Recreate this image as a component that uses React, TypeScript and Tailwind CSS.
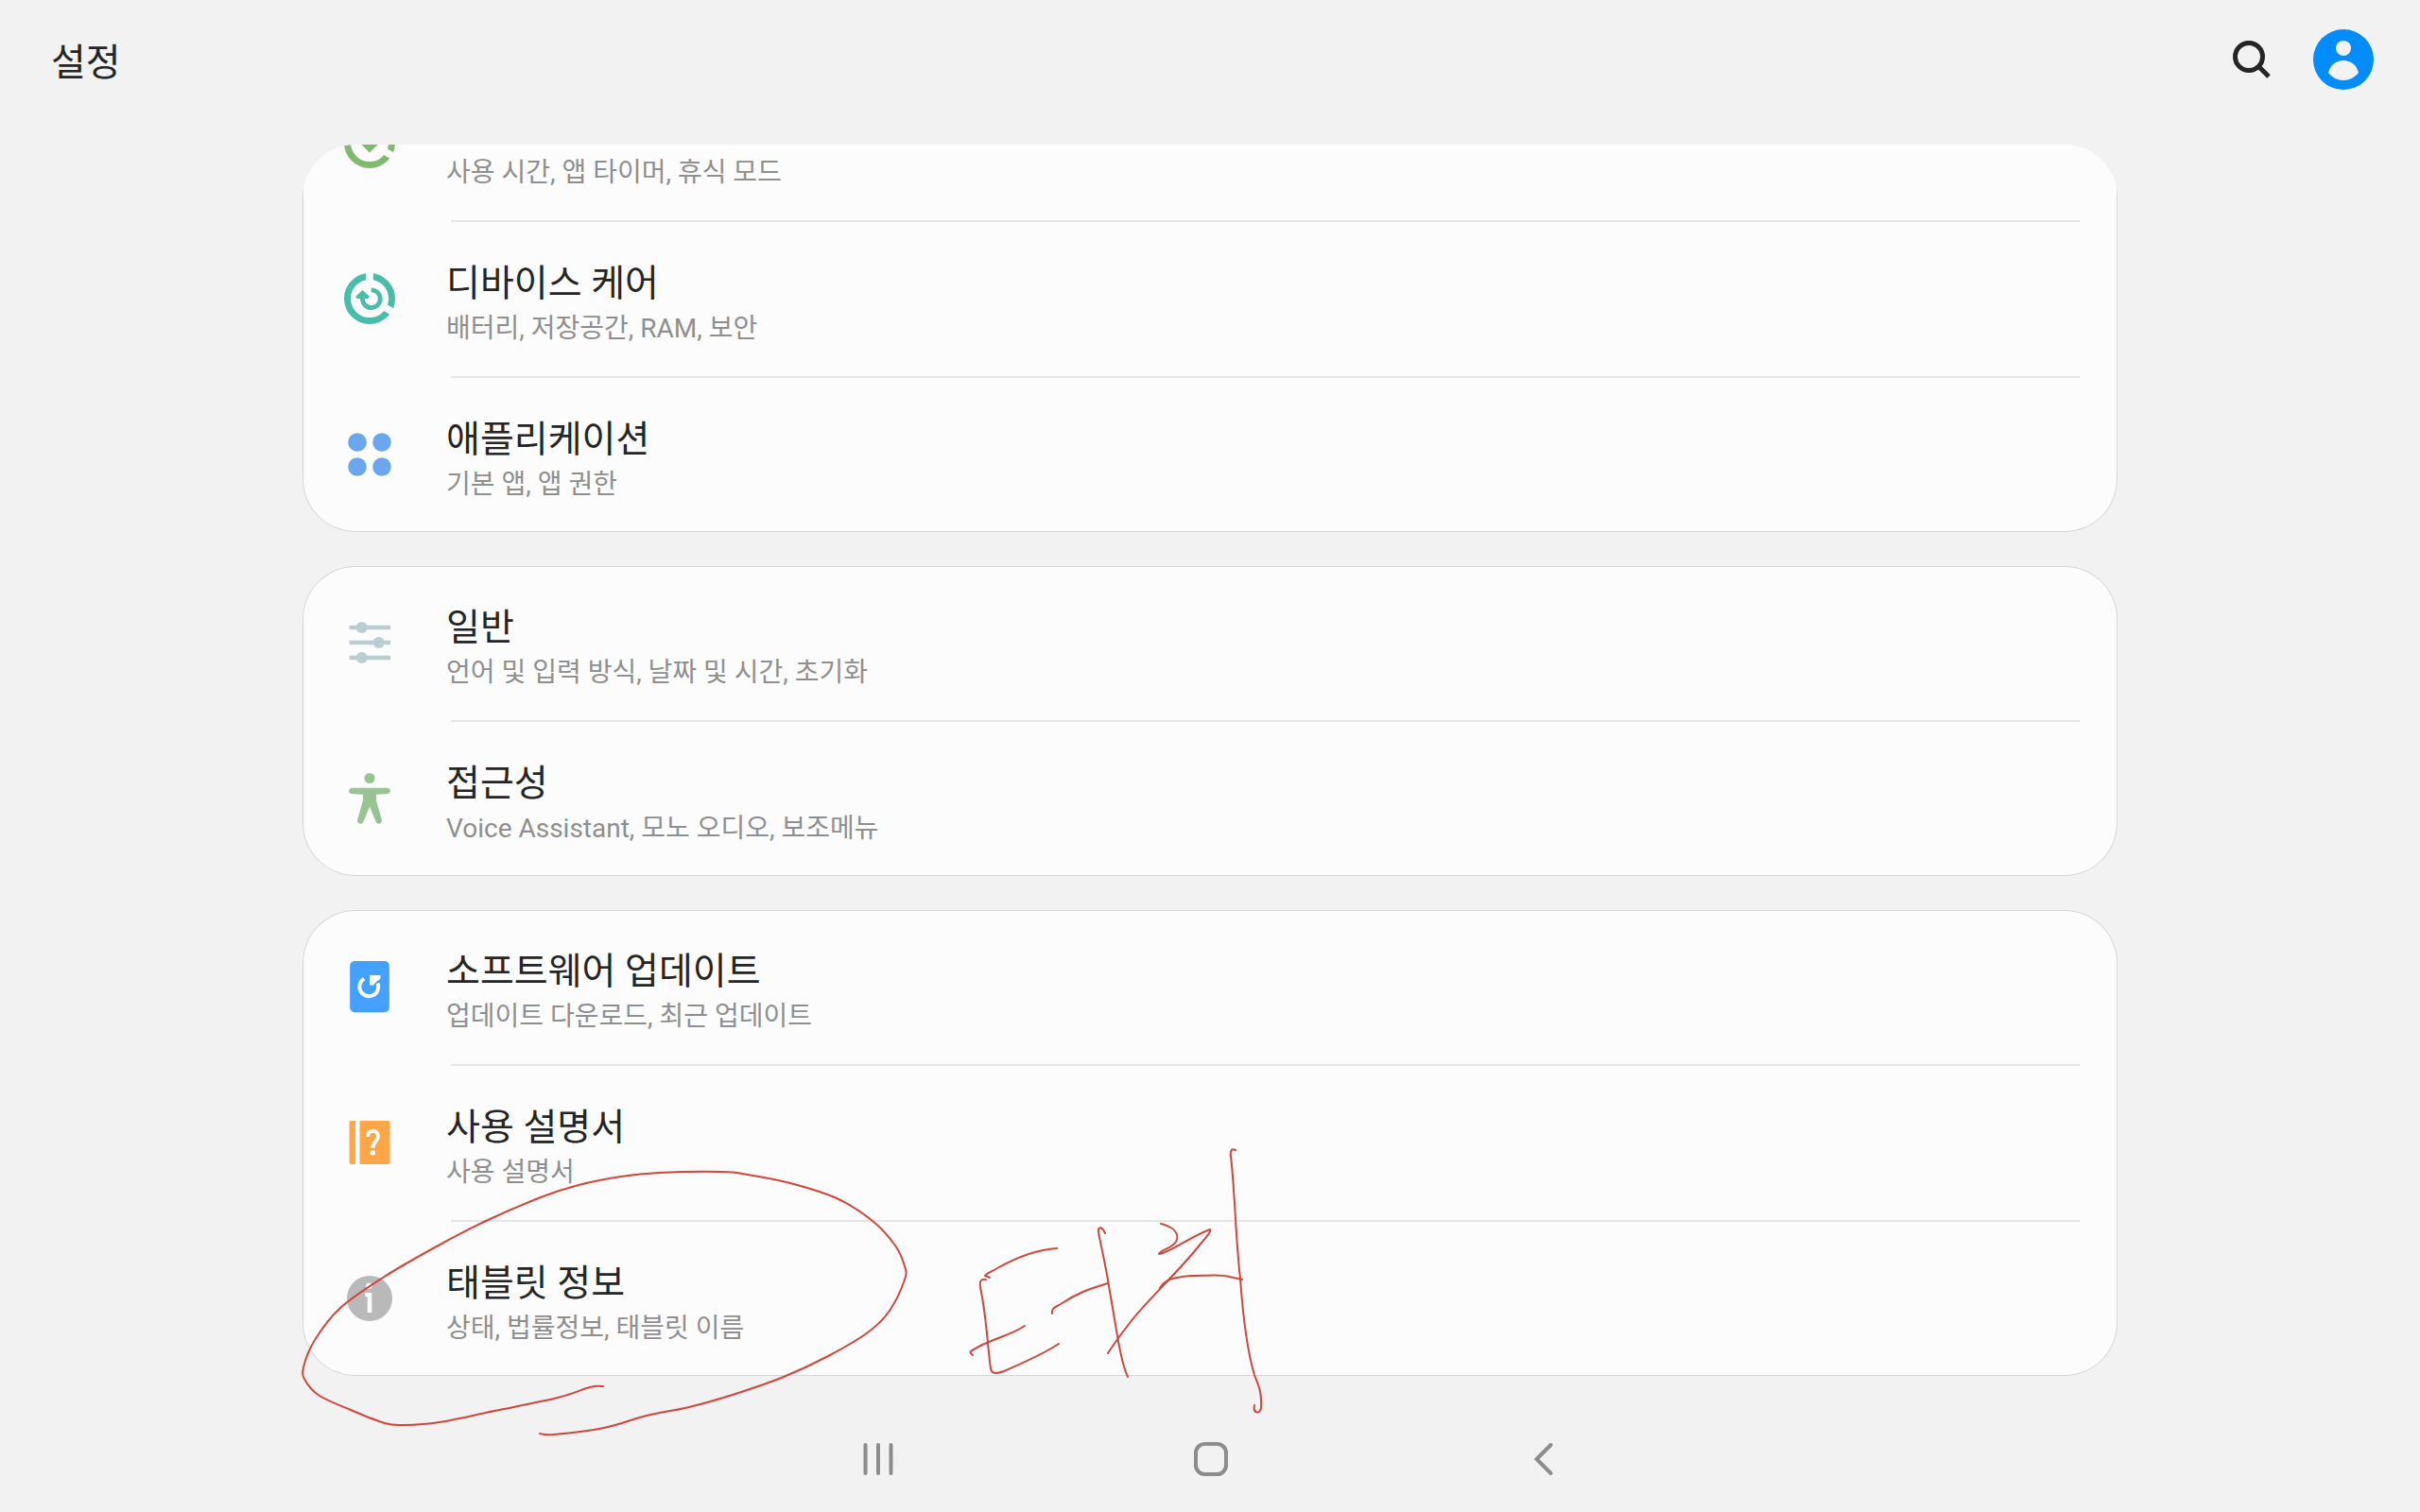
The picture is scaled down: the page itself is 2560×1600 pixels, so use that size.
import type { ReactNode } from "react";

type Item = { title: string; summary: string; icon: ReactNode };

function Icon({ children }: { children: ReactNode }) {
  return (
    <svg viewBox="0 0 56 56" className="mt-3.5 size-14 shrink-0" aria-hidden="true">
      {children}
    </svg>
  );
}

function Ring({ color, children }: { color: string; children: ReactNode }) {
  return (
    <Icon>
      <circle cx="28" cy="28" r="23.5" fill="none" stroke={color} strokeWidth="7" />
      <path d="M28 28V-2M28 28L54 43" stroke="#fcfcfc" strokeWidth="7.6" />
      <circle cx="28" cy="28" r="16" fill="#fcfcfc" />
      {children}
    </Icon>
  );
}

const wellbeing = (
  <Ring color="#80ba6c">
    <path
      d="M28 38.5L17 27.5A6.5 6.5 0 0 1 28 20A6.5 6.5 0 0 1 39 27.5Z"
      fill="#80ba6c"
    />
  </Ring>
);

const care = (
  <Ring color="#4abcaa">
    <path
      d="M29.7 18.8A9.4 9.4 0 1 1 20.5 27"
      fill="none"
      stroke="#4abcaa"
      strokeWidth="4.8"
    />
    <path d="M20.3 19L13 26.3L15 28.3L26.3 28L28 25.8Z" fill="#4abcaa" />
  </Ring>
);

const apps = (
  <Icon>
    <g fill="#6aa7ee">
      <circle cx="15" cy="15" r="9.8" />
      <circle cx="41" cy="15" r="9.8" />
      <circle cx="15" cy="41" r="9.8" />
      <circle cx="41" cy="41" r="9.8" />
    </g>
  </Icon>
);

const sliders = (
  <Icon>
    <path d="M6.5 12H50M6.5 28H50M6.5 44H50" stroke="#b9cdd2" strokeWidth="4.4" />
    <g fill="#b9cdd2">
      <circle cx="19.7" cy="12" r="6" />
      <circle cx="37.7" cy="28" r="6" />
      <circle cx="19.7" cy="44" r="6" />
    </g>
  </Icon>
);

const accessibility = (
  <Icon>
    <g fill="#98c494">
      <circle cx="28" cy="6.5" r="5.5" />
      <path d="M9 16.7H47A3.2 3.2 0 0 1 47.3 23L35 23.8V30L40.8 50.3A3.2 3.2 0 0 1 34.5 52.3L28 36.5L21.5 52.3A3.2 3.2 0 0 1 15.2 50.3L21 30V23.8L8.7 23A3.2 3.2 0 0 1 9 16.7Z" />
    </g>
  </Icon>
);

const update = (
  <Icon>
    <rect x="7.2" y="1" width="41.6" height="54.2" rx="5" fill="#45a1ff" />
    <path
      d="M22.2 19.6A10 10 0 1 0 36.6 24.5"
      fill="none"
      stroke="#fcfcfc"
      strokeWidth="4"
    />
    <path d="M28 16H39.4V19.8L35 23L32 26.4H28Z" fill="#fcfcfc" />
  </Icon>
);

const manual = (
  <Icon>
    <path d="M8.5 5H13V51H8.5A2 2 0 0 1 6.5 49V7A2 2 0 0 1 8.5 5Z" fill="#ffa748" />
    <path d="M17.5 5H47.5A2 2 0 0 1 49.5 7V49A2 2 0 0 1 47.5 51H17.5Z" fill="#ffa748" />
    <path
      d="M26 22C26 13.5 37 14 37 21.5C37 26.5 31.3 27 31.3 34"
      fill="none"
      stroke="#fcfcfc"
      strokeWidth="4"
    />
    <circle cx="31.3" cy="38.7" r="2.7" fill="#fcfcfc" />
  </Icon>
);

const about = (
  <Icon>
    <circle cx="28" cy="28" r="24" fill="#b9b9b9" />
    <circle cx="27.3" cy="14.8" r="3.2" fill="#fcfcfc" />
    <path d="M23.3 22H30.3V43H25.7V26.3H23.3Z" fill="#fcfcfc" />
  </Icon>
);

/* The first row is scrolled halfway out of view, so only its summary shows. */
const groups: Item[][] = [
  [
    { title: "", summary: "사용 시간, 앱 타이머, 휴식 모드", icon: wellbeing },
    { title: "디바이스 케어", summary: "배터리, 저장공간, RAM, 보안", icon: care },
    { title: "애플리케이션", summary: "기본 앱, 앱 권한", icon: apps },
  ],
  [
    { title: "일반", summary: "언어 및 입력 방식, 날짜 및 시간, 초기화", icon: sliders },
    { title: "접근성", summary: "Voice Assistant, 모노 오디오, 보조메뉴", icon: accessibility },
  ],
  [
    { title: "소프트웨어 업데이트", summary: "업데이트 다운로드, 최근 업데이트", icon: update },
    { title: "사용 설명서", summary: "사용 설명서", icon: manual },
    { title: "태블릿 정보", summary: "상태, 법률정보, 태블릿 이름", icon: about },
  ],
];

function Row({ item }: { item: Item }) {
  return (
    <button
      type="button"
      className="flex h-[163px] w-full items-start pt-[39px] pl-[43px] text-left"
    >
      {item.icon}
      <span className="ml-[53px] flex flex-col">
        <span className="min-h-[52px] text-[39px] leading-[52px] text-[#252525]">
          {item.title}
        </span>
        <span className="text-[28px] leading-[44px] text-[#8f8f8f]">{item.summary}</span>
      </span>
    </button>
  );
}

/* Smooth curve through every point (Catmull-Rom as cubic Béziers). */
function smooth(points: number[][]) {
  let d = `M${points[0][0]} ${points[0][1]}`;
  for (let i = 0; i < points.length - 1; i++) {
    const p0 = points[Math.max(i - 1, 0)];
    const p1 = points[i];
    const p2 = points[i + 1];
    const p3 = points[Math.min(i + 2, points.length - 1)];
    d += `C${p1[0] + (p2[0] - p0[0]) / 6} ${p1[1] + (p2[1] - p0[1]) / 6} `;
    d += `${p2[0] - (p3[0] - p1[0]) / 6} ${p2[1] - (p3[1] - p1[1]) / 6} ${p2[0]} ${p2[1]}`;
  }
  return d;
}

const loop = [
  [638, 1467], [624, 1468], [590, 1479], [523, 1493], [465, 1505], [427, 1508],
  [407, 1506], [371, 1492], [338, 1477], [323, 1461], [321, 1447], [333, 1418],
  [360, 1384], [405, 1352], [460, 1320], [514, 1292], [572, 1267], [612, 1254],
  [657, 1245], [697, 1241], [764, 1240], [791, 1243], [836, 1252], [885, 1268],
  [923, 1292], [947, 1318], [957, 1340], [957, 1354], [941, 1387], [918, 1410],
  [876, 1435], [829, 1457], [778, 1475], [729, 1489], [684, 1498], [639, 1511],
  [586, 1518], [571, 1517],
];

/* Pen strokes drawn over the settings list. */
function PenStrokes() {
  return (
    <svg
      viewBox="310 1200 1040 340"
      className="pointer-events-none absolute top-[1200px] left-[310px] h-[340px] w-[1040px]"
      fill="none"
      stroke="#d0463c"
      strokeWidth="2"
      strokeLinecap="round"
      strokeLinejoin="round"
      aria-hidden="true"
    >
      <path d={smooth(loop)} />
      <path d="M1047 1352L1042 1350C1043 1348 1048 1346 1055 1342C1080 1328 1100 1322 1118 1321" />
      <path d="M1043 1354C1038 1353 1036 1355 1037 1362C1044 1395 1045 1430 1048 1448C1049 1454 1053 1454 1062 1451C1080 1443 1102 1434 1120 1422" />
      <path d="M1029 1434C1025 1431 1026 1430 1030 1428C1045 1418 1070 1413 1084 1403" />
      <path d="M1169 1305C1166 1298 1161 1297 1162 1304C1166 1325 1170 1340 1174 1367C1181 1405 1185 1440 1193 1457" />
      <path d="M1113 1390C1112 1385 1115 1384 1122 1380C1140 1368 1152 1364 1172 1358" />
      <path d="M1228 1295C1240 1298 1247 1304 1245 1312C1242 1321 1228 1322 1226 1327C1235 1327 1262 1307 1280 1301C1282 1303 1275 1310 1262 1326C1240 1352 1210 1380 1195 1400C1185 1413 1177 1424 1172 1432" />
      <path d="M1227 1363C1232 1354 1240 1352 1260 1350C1278 1350 1292 1348 1300 1351L1314 1354" />
      <path d="M1307 1217C1303 1215 1301 1217 1302 1224C1306 1255 1307 1310 1312 1353C1315 1395 1321 1435 1327 1455C1331 1466 1335 1472 1334 1490C1333 1497 1325 1496 1327 1487" />
    </svg>
  );
}

export default function App() {
  return (
    <div className="relative flex min-h-screen flex-col overflow-hidden bg-[#f2f2f2] font-['Roboto','Noto_Sans_CJK_KR',sans-serif]">
      <header className="flex h-[153px] items-start justify-between pt-[31px] pr-[49px] pl-[54px]">
        <h1 className="pt-1 text-[40px] leading-[64px] text-[#252525]">설정</h1>
        <div className="flex items-center gap-10">
          <button type="button" aria-label="검색" className="size-[52px]">
            <svg viewBox="0 0 52 52" fill="none" stroke="#252525" strokeWidth="5">
              <circle cx="24" cy="23" r="14.5" />
              <path d="M34 33L45 44" />
            </svg>
          </button>
          <button type="button" aria-label="계정" className="size-16">
            <svg viewBox="0 0 64 64">
              <circle cx="32" cy="32" r="32" fill="#018cff" />
              <circle cx="32" cy="20" r="8" fill="#f3f3f3" />
              <path
                d="M16 46C18 38 24 33 32 33C40 33 46 38 48 46C44 51 38 54 32 54C26 54 20 51 16 46Z"
                fill="#f3f3f3"
              />
            </svg>
          </button>
        </div>
      </header>

      <main className="mx-[12.5%] overflow-hidden rounded-t-[56px]">
        <div className="-mt-[83px] flex flex-col gap-9">
          {groups.map((group) => (
            <ul
              key={group[0].summary}
              className="rounded-[56px] bg-[#fcfcfc] shadow-[inset_0_0_0_1px_#d6d6d6]"
            >
              {group.map((item, i) => (
                <li key={item.summary}>
                  {i > 0 && <hr className="mr-10 ml-[157px] border-t-2 border-[#e5e5e5]" />}
                  <Row item={item} />
                </li>
              ))}
            </ul>
          ))}
        </div>
      </main>

      <nav className="mt-auto flex h-28 items-center justify-center">
        <button type="button" aria-label="최근 앱" className="flex w-[352px] justify-center">
          <svg
            viewBox="0 0 40 40"
            className="size-10"
            stroke="#8c8c8c"
            strokeWidth="4"
            strokeLinecap="round"
          >
            <path d="M7.500 5V35M21 5V35M34.500 5V35" />
          </svg>
        </button>
        <button type="button" aria-label="홈" className="flex w-[352px] justify-center">
          <svg
            viewBox="0 0 40 40"
            className="size-10"
            fill="none"
            stroke="#8c8c8c"
            strokeWidth="4"
          >
            <rect x="5" y="4" width="32" height="32" rx="9.5" />
          </svg>
        </button>
        <button type="button" aria-label="뒤로" className="flex w-[352px] justify-center">
          <svg
            viewBox="0 0 40 40"
            className="size-10"
            fill="none"
            stroke="#8c8c8c"
            strokeWidth="4"
            strokeLinecap="round"
          >
            <path d="M28.5 5L13.5 20L28.5 35" />
          </svg>
        </button>
      </nav>

      <PenStrokes />
    </div>
  );
}
